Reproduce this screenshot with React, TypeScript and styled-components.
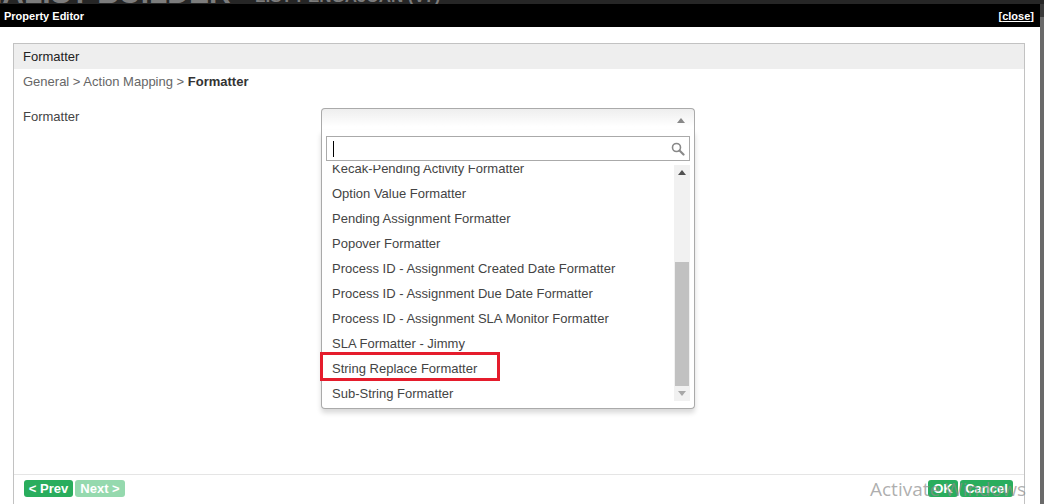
import React from "react";
import styled, { createGlobalStyle } from "styled-components";

const Global = createGlobalStyle`
  html, body { margin: 0; padding: 0; background: #ffffff; }
  body { font-family: "Liberation Sans", Arial, sans-serif; }
  * { box-sizing: border-box; }
`;

const Page = styled.div`
  width: 1044px;
  height: 504px;
  display: flex;
  flex-direction: column;
  overflow: hidden;
  position: relative;
`;

const BackStrip = styled.div`
  height: 4px;
  background: #262626;
  overflow: hidden;
  display: flex;
  align-items: flex-start;
  gap: 14px;
  white-space: nowrap;
`;

const BackTitle = styled.span<{ $size: number; $shift: number }>`
  font-size: ${(p) => p.$size}px;
  font-weight: bold;
  color: #7c7c7c;
  line-height: 1;
  margin-top: ${(p) => p.$shift}px;
  margin-left: ${(p) => (p.$size > 20 ? -6 : 0)}px;
`;

const Main = styled.div`
  flex: 1;
  display: flex;
  min-height: 0;
`;

const Dialog = styled.div`
  width: 1040px;
  display: flex;
  flex-direction: column;
  background: #ffffff;
`;

const SideStrip = styled.div`
  width: 4px;
  background: linear-gradient(#3a3a3a 0, #3a3a3a 13px, #6a6a6a 13px);
`;

const TitleBar = styled.div`
  height: 23px;
  background: #000000;
  display: flex;
  align-items: center;
  justify-content: space-between;
  padding: 0 6px 0 4px;
  color: #ffffff;
  font-size: 11px;
  font-weight: bold;
`;

const CloseLink = styled.span`
  color: #ffffff;
  & u { text-decoration: underline; }
`;

const Body = styled.div`
  flex: 1;
  padding: 16px 15px 0 13px;
  display: flex;
  min-height: 0;
`;

const Panel = styled.div`
  flex: 1;
  border: 1px solid #c2c2c2;
  border-bottom: none;
  display: flex;
  flex-direction: column;
`;

const PanelHeader = styled.div`
  height: 25px;
  background: #eeeeee;
  display: flex;
  align-items: center;
  padding-left: 9px;
  font-size: 13px;
  color: #222222;
`;

const Crumbs = styled.div`
  height: 24px;
  display: flex;
  align-items: center;
  padding-left: 9px;
  font-size: 13px;
  color: #666666;
  & b { color: #333333; }
`;

const Content = styled.div`
  flex: 1;
  padding: 15px 0 0 9px;
`;

const FormRow = styled.div`
  display: flex;
  align-items: flex-start;
`;

const Label = styled.div`
  width: 298px;
  font-size: 13px;
  color: #444444;
  padding-top: 1px;
`;

const SelectWrap = styled.div`
  width: 374px;
  position: relative;
`;

const SelectHead = styled.div`
  height: 23px;
  border: 1px solid #aaaaaa;
  border-bottom: none;
  border-radius: 4px 4px 0 0;
  background: linear-gradient(#eeeeee 0%, #ffffff 80%);
  display: flex;
  align-items: center;
  justify-content: flex-end;
  padding-right: 9px;
`;

const UpArrow = styled.span<{ $color?: string }>`
  width: 0;
  height: 0;
  border-left: 4px solid transparent;
  border-right: 4px solid transparent;
  border-bottom: 5px solid ${(p) => p.$color || "#777777"};
`;

const DownArrow = styled.span`
  width: 0;
  height: 0;
  border-left: 4px solid transparent;
  border-right: 4px solid transparent;
  border-top: 5px solid #a8a8a8;
`;

const Drop = styled.div`
  position: absolute;
  top: 22px;
  left: 0;
  width: 374px;
  height: 279px;
  background: #ffffff;
  border: 1px solid #aaaaaa;
  border-top: none;
  border-radius: 0 0 4px 4px;
  box-shadow: 0 4px 5px rgba(0, 0, 0, 0.15);
  display: flex;
  flex-direction: column;
  padding: 6px 4px 4px 4px;
  z-index: 5;
`;

const Search = styled.div`
  height: 25px;
  border: 1px solid #aaaaaa;
  display: flex;
  align-items: center;
  justify-content: space-between;
  padding: 0 4px 0 6px;
  flex-shrink: 0;
`;

const Caret = styled.span`
  width: 1px;
  height: 16px;
  background: #000000;
`;

const ListArea = styled.div`
  flex: 1;
  display: flex;
  margin-top: 4px;
  min-height: 0;
  overflow: hidden;
`;

const Items = styled.ul`
  flex: 1;
  margin: 0;
  padding: 0;
  list-style: none;
  overflow: hidden;
`;

const ItemsInner = styled.div`
  margin-top: -9px;
`;

const Item = styled.li`
  height: 25px;
  line-height: 15px;
  padding: 5px 6px;
  font-size: 13px;
  color: #444444;
  white-space: nowrap;
`;

const Marker = styled.div`
  position: absolute;
  left: -2px;
  top: 222px;
  width: 180px;
  height: 29px;
  border: 3px solid #e51c2c;
  pointer-events: none;
`;

const ScrollBar = styled.div`
  width: 16px;
  margin-bottom: 3px;
  background: #f1f1f1;
  display: flex;
  flex-direction: column;
`;

const ScrollBtn = styled.div`
  height: 17px;
  display: flex;
  align-items: center;
  justify-content: center;
`;

const Track = styled.div`
  flex: 1;
  display: flex;
  flex-direction: column;
  padding: 82px 1px 0 1px;
`;

const Thumb = styled.div`
  height: 124px;
  background: #c1c1c1;
`;

const Footer = styled.div`
  height: 30px;
  border-top: 1px solid #e5e5e5;
  display: flex;
  align-items: flex-start;
  justify-content: space-between;
  padding: 5px 11px 0 10px;
  flex-shrink: 0;
`;

const BtnGroup = styled.div`
  display: flex;
  gap: 2px;
`;

const Btn = styled.button<{ $faded?: boolean; $w: number }>`
  height: 17px;
  width: ${(p) => p.$w}px;
  border: none;
  border-radius: 3px;
  background: ${(p) => (p.$faded ? "#95d9ae" : "#29ad5d")};
  color: #ffffff;
  font-family: "Liberation Sans", Arial, sans-serif;
  font-size: 13px;
  font-weight: bold;
  padding: 0;
  line-height: 17px;
  cursor: pointer;
`;

const Watermark = styled.div`
  position: absolute;
  left: 870px;
  top: 476px;
  font-family: "Open Sans", "Noto Sans", sans-serif;
  font-size: 19px;
  color: rgba(140, 140, 140, 0.7);
  pointer-events: none;
  white-space: nowrap;
  z-index: 10;
`;

const SearchIcon = () => (
  <svg width="14" height="14" viewBox="0 0 14 14">
    <circle cx="5.5" cy="5.5" r="4" fill="none" stroke="#888" strokeWidth="1.6" />
    <line x1="8.5" y1="8.5" x2="12.5" y2="12.5" stroke="#888" strokeWidth="2.2" strokeLinecap="round" />
  </svg>
);

const options = [
  "Kecak-Pending Activity Formatter",
  "Option Value Formatter",
  "Pending Assignment Formatter",
  "Popover Formatter",
  "Process ID - Assignment Created Date Formatter",
  "Process ID - Assignment Due Date Formatter",
  "Process ID - Assignment SLA Monitor Formatter",
  "SLA Formatter - Jimmy",
  "String Replace Formatter",
  "Sub-String Formatter",
];

export default function App() {
  return (
    <Page>
      <Global />
      <BackStrip>
        <BackTitle $size={30} $shift={-22}>IALIST BUILDER</BackTitle>
        <BackTitle $size={17} $shift={-12}>- LIST PENGAJUAN (V7)</BackTitle>
      </BackStrip>
      <Main>
        <Dialog>
          <TitleBar>
            <span>Property Editor</span>
            <CloseLink>
              [<u>close</u>]
            </CloseLink>
          </TitleBar>
          <Body>
            <Panel>
              <PanelHeader>Formatter</PanelHeader>
              <Crumbs>
                General &gt; Action Mapping &gt;&nbsp;<b>Formatter</b>
              </Crumbs>
              <Content>
                <FormRow>
                  <Label>Formatter</Label>
                  <SelectWrap>
                    <SelectHead>
                      <UpArrow $color="#888888" />
                    </SelectHead>
                    <Drop>
                      <Search>
                        <Caret />
                        <SearchIcon />
                      </Search>
                      <ListArea>
                        <Items>
                          <ItemsInner>
                            {options.map((o) => (
                              <Item key={o}>{o}</Item>
                            ))}
                          </ItemsInner>
                        </Items>
                        <ScrollBar>
                          <ScrollBtn>
                            <UpArrow $color="#505050" />
                          </ScrollBtn>
                          <Track>
                            <Thumb />
                          </Track>
                          <ScrollBtn>
                            <DownArrow />
                          </ScrollBtn>
                        </ScrollBar>
                      </ListArea>
                      <Marker />
                    </Drop>
                  </SelectWrap>
                </FormRow>
              </Content>
              <Footer>
                <BtnGroup>
                  <Btn $w={49}>&lt; Prev</Btn>
                  <Btn $w={50} $faded>
                    Next &gt;
                  </Btn>
                </BtnGroup>
                <BtnGroup>
                  <Btn $w={30}>OK</Btn>
                  <Btn $w={53}>Cancel</Btn>
                </BtnGroup>
              </Footer>
            </Panel>
          </Body>
        </Dialog>
        <SideStrip />
      </Main>
      <Watermark>Activate Windows</Watermark>
    </Page>
  );
}
